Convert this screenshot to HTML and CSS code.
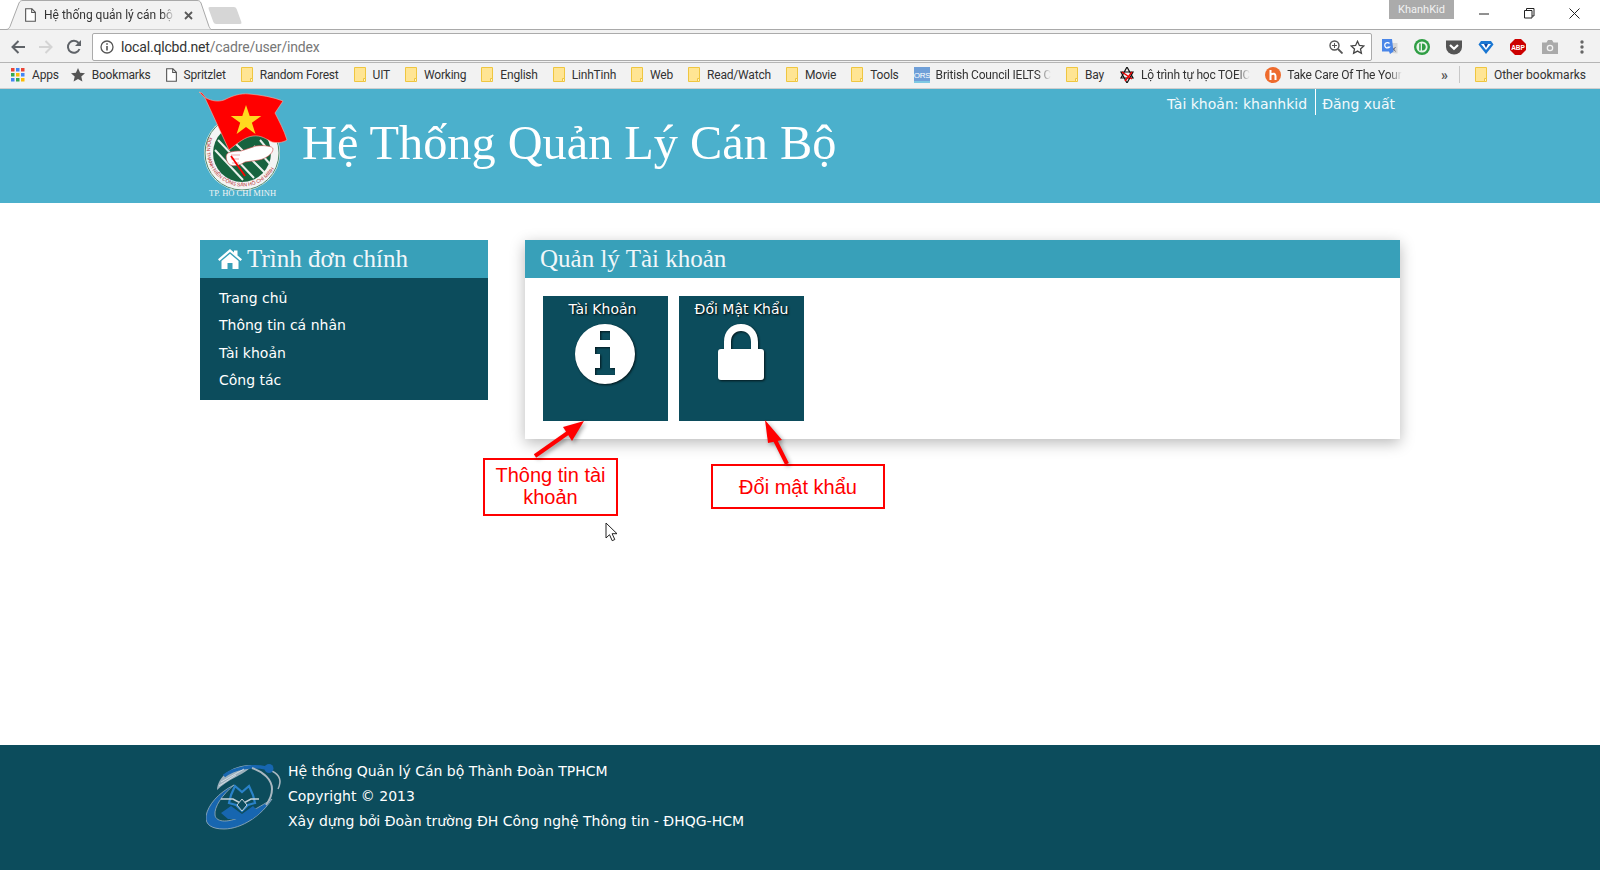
FILE: index.html
```html
<!DOCTYPE html>
<html lang="vi">
<head>
<meta charset="utf-8">
<title>Hệ thống quản lý cán bộ</title>
<link rel="stylesheet" href="styles.css">
</head>
<body>
<svg class="defs" width="0" height="0" aria-hidden="true">
  <symbol id="folder" viewBox="0 0 12 15"><path d="M.5.5h11v12.500h-1.500v1.500H.5z" fill="#ffe594" stroke="#efc640"/><path d="M9.500 11.500h2v3h-2z" fill="#fff3c4" stroke="#efc640"/></symbol>
  <symbol id="page" viewBox="0 0 12 15"><path d="M.7.7h6.800l3.800 3.800v9.800H.7z" fill="#fff" stroke="#555" stroke-width="1.200"/><path d="M7.300.7v4h4" fill="none" stroke="#555" stroke-width="1.200"/></symbol>
</svg>

<div class="browser">
  <div class="tabstrip">
    <div class="tab">
      <svg class="tab-shape" width="206" height="30" viewBox="0 0 206 30"><path d="M0 29.500h1c2 0 3-1 4-3L14 3c1-2 2-2.500 4-2.500h174c2 0 3 .5 4 2.500l8 23.500c1 2 2 3 2 3" fill="#f2f2f2" stroke="#a9a9a9"/></svg>
      <svg class="tab-icon" width="11" height="14"><use href="#page"/></svg>
      <span class="tab-title">Hệ thống quản lý cán bộ</span>
      <svg class="tab-close" width="9" height="9" viewBox="0 0 9 9"><path d="M1 1l7 7M8 1L1 8" stroke="#5a5a5a" stroke-width="1.800"/></svg>
    </div>
    <div class="newtab"></div>
    <div class="strip-fill"></div>
    <div class="profile">KhanhKid</div>
    <div class="winbtns">
      <svg width="11" height="11" viewBox="0 0 11 11"><path d="M0 6h10" stroke="#222"/></svg>
      <svg width="11" height="11" viewBox="0 0 11 11"><path d="M.5 2.500h7.500v7.500H.5zM2.500 2.500V.5H10v7.500H8" fill="none" stroke="#222"/></svg>
      <svg width="11" height="11" viewBox="0 0 11 11"><path d="M.5.5l10 10M10.500.5l-10 10" stroke="#222"/></svg>
    </div>
  </div>

  <div class="toolbar">
    <svg class="nav" width="16" height="16" viewBox="0 0 16 16"><path d="M15 8H3M8.500 2L2.500 8l6 6" fill="none" stroke="#5f6368" stroke-width="2"/></svg>
    <svg class="nav" width="16" height="16" viewBox="0 0 16 16"><path d="M1 8h12M7.500 2l6 6-6 6" fill="none" stroke="#d4d4d4" stroke-width="2"/></svg>
    <svg class="nav" width="16" height="16" viewBox="0 0 16 16"><path d="M13.500 10A6 6 0 1 1 12.600 4" fill="none" stroke="#5f6368" stroke-width="2"/><path d="M15 1v6H9z" fill="#5f6368"/></svg>
    <div class="omnibox">
      <svg width="14" height="14" viewBox="0 0 14 14"><circle cx="7" cy="7" r="6" fill="none" stroke="#555" stroke-width="1.300"/><path d="M7 6v4.500M7 3.200v1.600" stroke="#555" stroke-width="1.600"/></svg>
      <span class="url"><span class="url-host">local.qlcbd.net</span>/cadre/user/index</span>
      <svg class="zoom-ic" width="14" height="14" viewBox="0 0 14 14"><circle cx="5.500" cy="5.500" r="4.500" fill="none" stroke="#555" stroke-width="1.400"/><path d="M9 9l4.500 4.500" stroke="#555" stroke-width="1.800"/><path d="M3 5.500h5M5.500 3v5" stroke="#555"/></svg>
      <svg width="15" height="15" viewBox="0 0 15 15"><path d="M7.500 1.300l1.900 4.100 4.400.5-3.300 3 .9 4.400-3.900-2.200-3.900 2.200.9-4.400-3.300-3 4.400-.5z" fill="none" stroke="#444" stroke-width="1.300"/></svg>
    </div>
    <div class="exts">
      <svg width="16" height="16" viewBox="0 0 16 16"><path d="M5 4h10.500v10.500L10 14z" fill="#d6d6d6"/><path d="M10 8l3.500 4.500M13.500 8L10 12.500" stroke="#667" stroke-width="1"/><path d="M0 0h10l1.500 12.500L8 15l-1-2.500H0z" fill="#4a86e8"/><path d="M7.500 4.500A2.700 2.700 0 1 0 7.500 8H5.500" fill="none" stroke="#fff" stroke-width="1.200"/></svg>
      <svg width="16" height="16" viewBox="0 0 16 16"><circle cx="8" cy="8" r="8" fill="#2f9e44"/><circle cx="8" cy="8" r="5.600" fill="#e8f3ea"/><path d="M5.200 4.500h1.500v7H5.200zM8 4.500c5 0 5 7 0 7z" fill="#2f9e44"/></svg>
      <svg width="16" height="16" viewBox="0 0 16 16"><path d="M0 1.500h16V8a8 7.500 0 0 1-16 0z" fill="#555"/><path d="M4 6l4 3.800L12 6" fill="none" stroke="#fff" stroke-width="2.200"/></svg>
      <svg width="16" height="16" viewBox="0 0 16 16"><path d="M3 2h10l2.500 3.500L8 15 .5 5.500z" fill="#1976d2"/><path d="M3 5h10L8 11z" fill="#fff"/><path d="M6 5h4L8 9z" fill="#0d47a1"/></svg>
      <svg width="16" height="16" viewBox="0 0 16 16"><path d="M5 0h6l5 5v6l-5 5H5l-5-5V5z" fill="#c00"/><text x="8" y="10.800" class="abp">ABP</text></svg>
      <svg width="16" height="16" viewBox="0 0 16 16"><path d="M0 3.500h4.500L6 1h4l1.500 2.500H16V15H0z" fill="#aaa"/><circle cx="8" cy="9" r="3.300" fill="#f2f2f2"/><circle cx="8" cy="9" r="2" fill="#aaa"/></svg>
      <svg class="menu-dots" width="4" height="14" viewBox="0 0 4 14"><circle cx="2" cy="2" r="1.700" fill="#666"/><circle cx="2" cy="7" r="1.700" fill="#666"/><circle cx="2" cy="12" r="1.700" fill="#666"/></svg>
    </div>
  </div>

  <div class="bookmarks">
    <a class="bm bm-apps"><svg width="14" height="14" viewBox="0 0 14 14"><path d="M0 0h3.500v3.500H0z" fill="#ea4335"/><path d="M5 0h3.500v3.500H5z" fill="#4285f4"/><path d="M10 0h3.500v3.500H10z" fill="#ea4335"/><path d="M0 5h3.500v3.500H0z" fill="#34a853"/><path d="M5 5h3.500v3.500H5z" fill="#fbbc05"/><path d="M10 5h3.500v3.500H10z" fill="#4285f4"/><path d="M0 10h3.500v3.500H0z" fill="#4285f4"/><path d="M5 10h3.500v3.500H5z" fill="#34a853"/><path d="M10 10h3.500v3.500H10z" fill="#fbbc05"/></svg>Apps</a>
    <a class="bm"><svg width="14" height="14" viewBox="0 0 14 14"><path d="M7 0l2.100 4.700 5 .5-3.800 3.300 1.100 5L7 10.900l-4.400 2.600 1.100-5L-.1 5.200l5-.5z" fill="#555"/></svg>Bookmarks</a>
    <a class="bm"><svg width="11" height="14"><use href="#page"/></svg>Spritzlet</a>
    <a class="bm"><svg width="12" height="15"><use href="#folder"/></svg>Random Forest</a>
    <a class="bm"><svg width="12" height="15"><use href="#folder"/></svg>UIT</a>
    <a class="bm"><svg width="12" height="15"><use href="#folder"/></svg>Working</a>
    <a class="bm"><svg width="12" height="15"><use href="#folder"/></svg>English</a>
    <a class="bm"><svg width="12" height="15"><use href="#folder"/></svg>LinhTinh</a>
    <a class="bm"><svg width="12" height="15"><use href="#folder"/></svg>Web</a>
    <a class="bm"><svg width="12" height="15"><use href="#folder"/></svg>Read/Watch</a>
    <a class="bm"><svg width="12" height="15"><use href="#folder"/></svg>Movie</a>
    <a class="bm"><svg width="12" height="15"><use href="#folder"/></svg>Tools</a>
    <a class="bm bm-tight"><svg width="16" height="16" viewBox="0 0 16 16"><path d="M0 0h16v14H0z" fill="#6f9fd8"/><path d="M0 14h16v2H0z" fill="#7ec8e3"/><text x="8" y="10.500" class="ors-t">ORS</text></svg><span class="bm-fade">British Council IELTS C</span></a>
    <a class="bm"><svg width="12" height="15"><use href="#folder"/></svg>Bay</a>
    <a class="bm bm-tight"><svg width="16" height="16" viewBox="0 0 16 16"><path d="M8 0l6 11H2z M8 16L2 5h12z" fill="none" stroke="#111" stroke-width="1.200"/><path d="M3 5l10 7M13 5L6 14" stroke="#e00" stroke-width="1.400"/></svg><span class="bm-fade">Lộ trình tự học TOEIC</span></a>
    <a class="bm bm-tight"><svg width="16" height="16" viewBox="0 0 16 16"><circle cx="8" cy="8" r="8" fill="#ee6b2d"/><path d="M5.500 3v10M5.500 8c3-2.500 5-1 5 1v4" fill="none" stroke="#fff" stroke-width="2"/></svg><span class="bm-fade">Take Care Of The Your</span></a>
    <span class="bm-spacer"></span>
    <span class="bm-more">»</span>
    <span class="bm-sep"></span>
    <a class="bm bm-other"><svg width="12" height="15"><use href="#folder"/></svg>Other bookmarks</a>
  </div>
</div>

<header class="site-header">
  <div class="wrap header-inner">
    <svg class="logo" width="92" height="110" viewBox="0 0 92 110">
      <defs><path id="ring2" d="M11 47A36 36 0 0 0 79 73"/></defs>
      <circle cx="44" cy="63" r="38" fill="#f4f4f4"/>
      <circle cx="44" cy="63" r="37" fill="none" stroke="#1f6f4a" stroke-width=".8"/>
      <circle cx="44" cy="63" r="29" fill="#17633f"/>
      <path d="M20 50l36 38M17 60l28 30M26 42l42 42M62 50l10 12M56 56l16 18" stroke="#e9f1ec" stroke-width="2"/>
      <text class="ring-t"><textPath href="#ring2">ĐOÀN THANH NIÊN CỘNG SẢN HỒ CHÍ MINH</textPath></text>
      <path d="M1 2l3 1 4 5c6 3 12 4 18 2 8-4 16-7 25-6 12 1 24 3 34 7l-8 12c4 8 9 17 12 27-5 3-10 3-15 2-6-3-11-7-19-6-8 1-14 6-24 14L7 8z" fill="#f00" stroke="#f7b5a8" stroke-width=".6"/>
      <path d="M48 15l3.700 11h11.600l-9.400 6.800 3.600 11.100-9.500-6.900-9.400 6.900 3.600-11.100-9.400-6.800H44.300z" fill="#ffd91f"/>
      <path d="M30 63c5-2 9-2 13-2l15-5c8-1 17 0 17 3 0 5-8 10-14 11l-14 2c-6 4-13 5-16 2-3-3-4-9-1-11z" fill="#fff" stroke="#c44" stroke-width=".6"/>
      <path d="M33 65h9M33 69h8M34 73h7" stroke="#d88" stroke-width=".7"/>
      <path d="M33 66l14 20" stroke="#f00" stroke-width="1.800"/>
      <text x="44.500" y="106" class="logo-cap">TP. HỒ CHÍ MINH</text>
    </svg>
    <h1 class="site-title">Hệ Thống Quản Lý Cán Bộ</h1>
    <div class="account">
      <span class="account-name">Tài khoản: khanhkid</span>
      <a class="account-out">Đăng xuất</a>
    </div>
  </div>
</header>

<main class="wrap content">
  <aside class="sidebar">
    <h2 class="panel-head side-head">
      <svg width="24" height="20" viewBox="0 0 24 20"><path d="M12 0l4 3.400V1.500h3.500v4.900L24 10.200l-1.400 1.700L12 3 1.400 11.900 0 10.200z" fill="#fff"/><path d="M12 4.800l8.500 7.200v8h-6v-6h-5v6h-6v-8z" fill="#fff"/></svg>
      Trình đơn chính
    </h2>
    <ul class="side-menu">
      <li>Trang chủ</li>
      <li>Thông tin cá nhân</li>
      <li>Tài khoản</li>
      <li>Công tác</li>
    </ul>
  </aside>
  <section class="panel">
    <h2 class="panel-head">Quản lý Tài khoản</h2>
    <div class="tiles">
      <a class="tile">
        <span class="tile-title tile-title-off">Tài Khoản</span>
        <svg class="tile-icon" width="60" height="60" viewBox="0 0 60 60"><path fill-rule="evenodd" fill="#fff" d="M30 0a30 30 0 1 1 0 60 30 30 0 0 1 0-60zM25 7v9h10V7zM20 23v7h5v14h-5v7h20v-7h-5V23z"/></svg>
      </a>
      <a class="tile">
        <span class="tile-title">Đổi Mật Khẩu</span>
        <svg class="tile-icon" width="46" height="56" viewBox="0 0 46 56"><path fill="#fff" d="M23 0c10 0 17 7 17 18v7h3c2 0 3 1 3 3v25c0 2-1 3-3 3H3c-2 0-3-1-3-3V28c0-2 1-3 3-3h3v-7C6 7 13 0 23 0zm0 7c-6 0-10 4-10 11v7h20v-7c0-7-4-11-10-11z"/></svg>
      </a>
    </div>
  </section>
</main>

<footer class="site-footer">
  <div class="wrap footer-inner">
    <svg class="footer-logo" width="78" height="67" viewBox="0 0 78 67">
      <path d="M0 53C2 42 12 30 28 22 16 32 8 44 9 52c1 8 15 8 29 0 12-6 22-12 28-16C56 52 36 66 18 66 6 66-1 62 0 53z" fill="#1766b0" stroke="#9db1bd" stroke-width=".8"/>
      <path d="M11 27C12 14 24 3 44 2c6 0-6 8-14 12-8 4-14 8-19 13z" fill="#9db1bd"/>
      <path d="M18 13C28 5 46 2 60 5" fill="none" stroke="#1766b0" stroke-width="3.500"/>
      <path d="M15 19L38 6M13 23L30 12" stroke="#dfe7ec" stroke-width=".8"/>
      <path d="M46 5c12 4 20 12 20 21 0 6-3 12-6 16" fill="none" stroke="#a9b8c1" stroke-width="2"/>
      <path d="M66 8c8 4 10 10 6 18" fill="none" stroke="#a9b8c1" stroke-width="1.500"/>
      <circle cx="63" cy="5.500" r="4.500" fill="#1766b0"/>
      <path d="M25 32l4-9 7 6 7-6 4 9 2 8-7 2-6 6-6-6-7-2z" fill="none" stroke="#2a82c9" stroke-width="2.200"/>
      <path d="M15 36h12l9 5 9-5h8" fill="none" stroke="#c6d3da" stroke-width="1.500"/>
      <path d="M15 50l10-7 11 8 11-8 7 7-8 6H22z" fill="#1766b0"/>
      <path d="M36 36l5 6-5 6-5-6z" fill="#0c4c5c" stroke="#c6d3da"/>
    </svg>
    <div class="footer-text">
      <p>Hệ thống Quản lý Cán bộ Thành Đoàn TPHCM</p>
      <p>Copyright © 2013</p>
      <p>Xây dựng bởi Đoàn trường ĐH Công nghệ Thông tin - ĐHQG-HCM</p>
    </div>
  </div>
</footer>

<div class="callout callout-a">Thông tin tài<br>khoản</div>
<div class="callout callout-b">Đổi mật khẩu</div>
<svg class="arrows" width="320" height="80" viewBox="0 0 320 80">
  <path d="M5 38L42 12" stroke="#f00" stroke-width="4"/>
  <path d="M54 3L33 9 42 23z" fill="#f00"/>
  <path d="M257 46L244 20" stroke="#f00" stroke-width="4"/>
  <path d="M235 2L252 22 238 25z" fill="#f00"/>
</svg>
<svg class="cursor" width="14" height="20" viewBox="0 0 14 20"><path d="M1 1v15l3.500-3.300 2.700 6 2.600-1.200-2.700-5.800H12z" fill="#fff" stroke="#222"/></svg>
</body>
</html>
```
FILE: styles.css
```css
* { box-sizing: border-box; }
html, body { height: 100%; }
body {
  margin: 0;
  display: flex;
  flex-direction: column;
  height: 870px;
  overflow: hidden;
  background: #fff;
  font-family: "DejaVu Sans", Verdana, sans-serif;
  font-size: 14px;
  color: #fff;
}
.defs { position: absolute; }
a { color: inherit; text-decoration: none; }
h1, h2, p, ul { margin: 0; padding: 0; }

/* browser chrome */
.browser { flex: none; font-family: Roboto, "Open Sans", sans-serif; color: #333; }
.tabstrip { height: 30px; display: flex; align-items: flex-start; background: #fff; border-bottom: 1px solid #a9a9a9; }
.tab {
  position: relative;
  width: 206px;
  height: 30px;
  margin-left: 5px;
  display: flex;
  align-items: center;
  padding: 0 0 0 20px;
  font-size: 12px;
  z-index: 1;
}
.tab-shape { position: absolute; left: 0; top: 0; }
.tab-icon, .tab-title, .tab-close { position: relative; }
.tab-title {
  margin-left: 8px;
  width: 131px;
  white-space: nowrap;
  color: #333;
  -webkit-mask-image: linear-gradient(90deg, #000 90%, transparent);
  mask-image: linear-gradient(90deg, #000 90%, transparent);
}
.tab-close { margin-left: 9px; }
.newtab {
  width: 28px;
  height: 17px;
  margin: 7px 0 0 0;
  background: #d6d6d6;
  transform: skewX(20deg);
  border-radius: 2px;
}
.strip-fill { flex: 1; }
.profile {
  width: 65px;
  height: 19px;
  background: #ababab;
  color: #f2f2f2;
  font-size: 11px;
  text-align: center;
  line-height: 19px;
  margin-right: 25px;
}
.winbtns { display: flex; gap: 34px; padding: 8px 20px 0 0; }

.toolbar {
  height: 32px;
  background: #f2f2f2;
  display: flex;
  align-items: center;
  padding: 2px 13px 0 10px;
}
.nav { margin-right: 12px; flex: none; }
.nav:nth-child(3) { margin-right: 10px; }
.omnibox {
  width: 1280px;
  height: 28px;
  flex: none;
  background: #fff;
  border: 1px solid #ababab;
  border-radius: 2px;
  display: flex;
  align-items: center;
  gap: 7px;
  padding: 0 6px 0 7px;
  font-size: 14px;
}
.url { flex: 1; color: #777; letter-spacing: -.17px; }
.url-host { color: #333; }
.exts { display: flex; align-items: center; gap: 16px; margin-left: 10px; }
.menu-dots { margin-left: 6px; }
.abp { font: bold 6.500px "Liberation Sans", sans-serif; fill: #fff; text-anchor: middle; }
.ors-t { font: 8px "Liberation Sans", sans-serif; fill: #fff; text-anchor: middle; }

.bookmarks {
  height: 27px;
  background: #f2f2f2;
  border-top: 1px solid #b5b5b5;
  border-bottom: 1px solid #cfcfcf;
  display: flex;
  align-items: center;
  gap: 15px;
  padding: 0 14px 2px 11px;
  font-size: 12px;
  letter-spacing: -.2px;
  white-space: nowrap;
  overflow: hidden;
}
.bm { display: flex; align-items: center; gap: 7px; flex: none; }
.bm svg { flex: none; }
.bm-apps { margin-right: -3px; }
.bm-other { letter-spacing: 0; }
.bm-tight { gap: 6px; }
.bm-fade {
  display: block;
  -webkit-mask-image: linear-gradient(90deg, #000 88%, transparent);
  mask-image: linear-gradient(90deg, #000 88%, transparent);
}
.bm-spacer { flex: 1; }
.bm-more { font-size: 14px; font-weight: 700; color: #555; margin-left: 4px; }
.bm-sep { width: 1px; height: 17px; background: #c8c8c8; margin-left: -4px; }

/* page */
.wrap { width: 1200px; margin: 0 auto; }
.site-header { flex: none; height: 114px; background: #4bb0cc; }
.header-inner { display: flex; align-items: flex-start; height: 100%; }
.logo { flex: none; margin: 1px 0 0 -2px; }
.site-title {
  font: 400 48.300px/1 "Liberation Serif", serif;
  color: #fff;
  margin: 30px 0 0 12px;
  white-space: nowrap;
}
.account { margin-left: auto; display: flex; align-items: center; height: 30px; padding-right: 5px; color: #f3fafc; }
.account-name { padding-right: 8px; }
.account-out { align-self: flex-start; height: 26px; border-left: 1px solid #fff; padding-left: 6px; line-height: 30px; }

.content { flex: 1; display: flex; align-items: flex-start; gap: 37px; padding-top: 37px; }
.sidebar { width: 288px; flex: none; background: #0c4c5c; height: 160px; }
.panel-head {
  height: 38px;
  background: #38a0b9;
  color: #f1f7f9;
  font: 400 25px/38px "Liberation Serif", serif;
  padding-left: 15px;
}
.side-head { display: flex; align-items: center; gap: 5px; padding-left: 18px; }
.side-menu { list-style: none; padding: 7px 0 0 19px; }
.side-menu li { height: 27.400px; line-height: 27px; }
.panel { flex: 1; height: 199px; background: #fff; box-shadow: 0 4px 14px rgba(0,0,0,.28); }
.tiles { display: flex; gap: 11px; padding: 18px 0 0 18px; }
.tile {
  width: 125px;
  height: 125px;
  background: #0c4c5c;
  display: flex;
  flex-direction: column;
  align-items: center;
  padding-top: 4px;
  text-shadow: 1px 1px 2px #000;
}
.tile-title { line-height: 18px; }
.tile-title-off { margin-right: 6px; }
.tile-icon { margin: 6px 1px 0 0; filter: drop-shadow(1px 1px 1px rgba(0,0,0,.7)); }

.site-footer { flex: none; height: 125px; background: #0c4c5c; }
.footer-inner { display: flex; align-items: flex-start; padding-top: 14px; }
.footer-logo { flex: none; margin: 4px 0 0 6px; }
.footer-text { margin-left: 4px; }
.footer-text p { line-height: 25px; }

.logo-cap { font: 8.500px "Liberation Serif", serif; fill: #f4f4f4; text-anchor: middle; }
.ring-t { font: 5px "Liberation Sans", sans-serif; fill: #b3262a; }

/* annotations drawn over the page */
.callout {
  position: absolute;
  background: #fff;
  border: 2px solid #f00;
  color: #f00;
  font: 20px/22px "Liberation Sans", sans-serif;
  text-align: center;
}
.callout-a { left: 483px; top: 458px; width: 135px; height: 58px; padding-top: 4px; }
.callout-b { left: 711px; top: 464px; width: 174px; height: 45px; padding-top: 10px; }
.arrows { position: absolute; left: 530px; top: 418px; filter: drop-shadow(2px 2px 2px rgba(0,0,0,.35)); }
.cursor { position: absolute; left: 605px; top: 522px; }
```
